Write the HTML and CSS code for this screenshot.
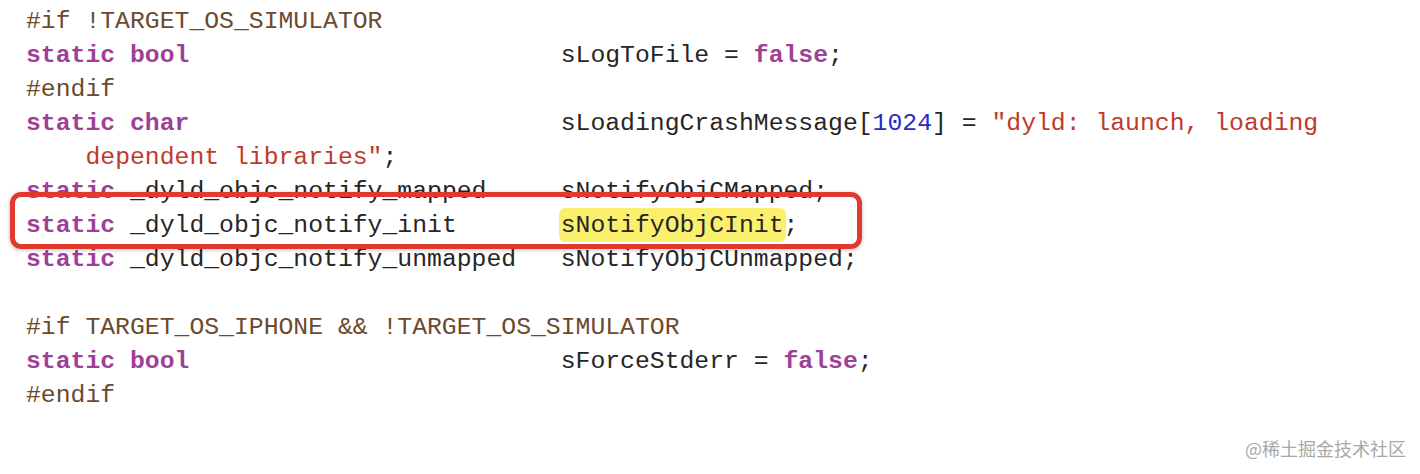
FILE: index.html
```html
<!DOCTYPE html>
<html lang="zh-CN">
<head>
    <meta charset="UTF-8">
    <meta name="viewport" content="width=device-width, initial-scale=1.0">
    <title>dyld.cpp</title>
    <link rel="stylesheet" href="styles.css">
</head>
<body>

<div class="editor">
    <div class="code">
        <div class="line"><span class="pp">#if !TARGET_OS_SIMULATOR</span></div>
        <div class="line"><span class="kw">static bool</span>                         sLogToFile = <span class="kw">false</span>;</div>
        <div class="line"><span class="pp">#endif</span></div>
        <div class="line"><span class="kw">static char</span>                         sLoadingCrashMessage[<span class="num">1024</span>] = <span class="str">"dyld: launch, loading</span></div>
        <div class="line">    <span class="str">dependent libraries"</span>;</div>
        <div class="line"><span class="kw">static</span> _dyld_objc_notify_mapped     sNotifyObjCMapped;</div>
        <div class="line"><span class="kw">static</span> _dyld_objc_notify_init       <span class="hl">sNotifyObjCInit</span>;</div>
        <div class="line"><span class="kw">static</span> _dyld_objc_notify_unmapped   sNotifyObjCUnmapped;</div>
        <div class="line"> </div>
        <div class="line"><span class="pp">#if TARGET_OS_IPHONE &amp;&amp; !TARGET_OS_SIMULATOR</span></div>
        <div class="line"><span class="kw">static bool</span>                         sForceStderr = <span class="kw">false</span>;</div>
        <div class="line"><span class="pp">#endif</span></div>
    </div>
    <div class="mark"></div>
</div>

<div class="watermark">@稀土掘金技术社区</div>

</body>
</html>
```

FILE: styles.css
```css
html, body {
    margin: 0;
    background: #ffffff;
}
body {
    width: 1420px;
    height: 474px;
    overflow: hidden;
    position: relative;
}
.editor {
    position: relative;
    padding: 4px 0 0 26px;
}
.code {
    font-family: "Liberation Mono", "DejaVu Sans Mono", monospace;
    font-size: 24.75px;
    line-height: 34px;
    color: #262626;
}
.line {
    white-space: pre;
    height: 34px;
}
.pp {
    color: #6c4a2e;
}
.kw {
    color: #9e3f98;
    font-weight: bold;
}
.str {
    color: #c03a2b;
}
.num {
    color: #2a2bc6;
}
.hl {
    background: #fbf06e;
    border-radius: 6px;
    padding: 3px 2px;
    margin: 0 -2px;
}
.mark {
    position: absolute;
    left: 10px;
    top: 192px;
    width: 842px;
    height: 47px;
    border: 5px solid #e0392f;
    border-radius: 11px;
    box-shadow: 0 1px 4px rgba(0, 0, 0, 0.25);
}
.watermark {
    position: absolute;
    right: 14px;
    bottom: 13px;
    font-family: "Noto Sans CJK SC", "Noto Sans", sans-serif;
    font-size: 18px;
    color: #a8a8a8;
    text-shadow: 0 0 2px #ffffff;
}
```
